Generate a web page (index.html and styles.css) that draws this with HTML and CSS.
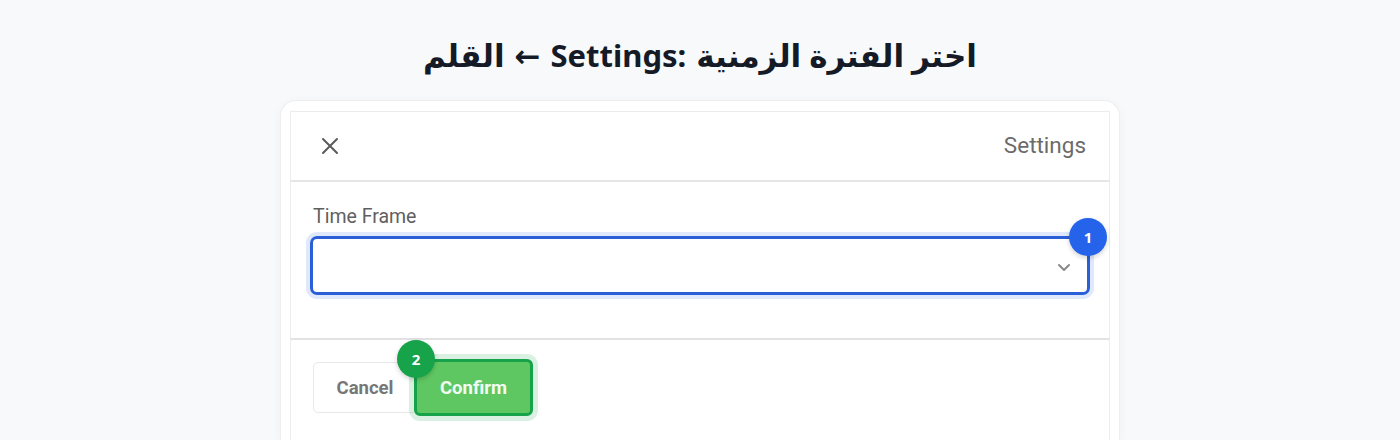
FILE: index.html
```html
<!DOCTYPE html>
<html lang="en">
<head>
    <meta charset="UTF-8">
    <title>Settings - Time Frame</title>
    <link rel="stylesheet" href="styles.css">
</head>
<body>
    <h1 class="page-title" dir="ltr">
        <span class="ar" dir="rtl">القلم</span>
        <span>←</span>
        <span>Settings:</span>
        <span class="ar" dir="rtl">اختر الفترة الزمنية</span>
    </h1>

    <div class="card">
        <div class="panel">
            <div class="panel-header">
                <button class="close-btn" aria-label="Close">
                    <svg width="18" height="18" viewBox="0 0 18 18">
                        <path d="M2 2 L16 16 M16 2 L2 16" stroke="#5a5a5a" stroke-width="2" stroke-linecap="round"/>
                    </svg>
                </button>
                <div class="panel-title">Settings</div>
            </div>

            <div class="panel-body">
                <label class="field-label">Time Frame</label>
                <div class="select-box">
                    <svg class="chevron" width="14" height="9" viewBox="0 0 14 9">
                        <path d="M2 2 L7 7 L12 2" fill="none" stroke="#8a8a8a" stroke-width="2" stroke-linecap="round" stroke-linejoin="round"/>
                    </svg>
                    <span class="badge badge-blue badge-select">1</span>
                </div>
            </div>

            <div class="panel-footer">
                <button class="btn btn-cancel">Cancel</button>
                <button class="btn btn-confirm">
                    Confirm
                    <span class="badge badge-green badge-confirm">2</span>
                </button>
            </div>
        </div>
    </div>
</body>
</html>
```

FILE: styles.css
```css
body {
    margin: 0;
    padding-top: 30px;
    background-color: #f8f9fb;
    font-family: Roboto, "Liberation Sans", sans-serif;
}
.page-title {
    margin: 0 0 20px;
    display: flex;
    justify-content: center;
    gap: 10px;
    font-family: "Noto Sans", "DejaVu Sans", sans-serif;
    font-size: 31px;
    line-height: 50px;
    font-weight: 700;
    color: #141a26;
}
.page-title .ar {
    unicode-bidi: isolate;
}
.card {
    width: 820px;
    margin: 0 auto;
    padding: 10px 9px 0;
    background-color: #ffffff;
    border: 1px solid #eceef1;
    border-bottom: none;
    border-radius: 16px 16px 0 0;
    box-shadow: 0 2px 12px rgba(0, 0, 0, 0.04);
}
.panel {
    border: 1px solid #ececec;
    border-bottom: none;
    height: 330px;
}
.panel-header {
    height: 68px;
    display: flex;
    align-items: center;
    justify-content: space-between;
    padding: 0 23px 0 30px;
    border-bottom: 2px solid #e6e6e8;
}
.close-btn {
    border: none;
    background: none;
    padding: 0;
    display: flex;
    cursor: pointer;
}
.panel-title {
    font-size: 22.5px;
    color: #6b6b6b;
    margin-top: -2px;
}
.panel-body {
    padding: 23px 19px 43px;
    border-bottom: 2px solid #e2e2e4;
}
.field-label {
    display: block;
    font-size: 19.5px;
    line-height: 24px;
    color: #5f5f5f;
    padding-left: 3px;
    margin-bottom: 7px;
}
.select-box {
    position: relative;
    height: 53px;
    border: 3px solid #2a5fd8;
    border-radius: 7px;
    box-shadow: 0 0 0 4px rgba(37, 99, 235, 0.14);
    display: flex;
    align-items: center;
    justify-content: flex-end;
    padding-right: 16px;
}
.chevron {
    margin-top: 4px;
}
.panel-footer {
    display: flex;
    align-items: center;
    padding: 19px 22px;
}
.btn {
    font-family: Roboto, "Liberation Sans", sans-serif;
    font-size: 18.5px;
    font-weight: 700;
    border-radius: 5px;
    cursor: pointer;
}
.btn-cancel {
    width: 104px;
    height: 51px;
    margin-right: -3px;
    padding: 0;
    background-color: #ffffff;
    border: 1px solid #e8e8e8;
    color: #777777;
}
.btn-confirm {
    position: relative;
    width: 119px;
    height: 57px;
    background-color: #5fc762;
    border: 3px solid #17a34a;
    border-radius: 6px;
    color: #f3fbf3;
    box-shadow: 0 0 0 5px rgba(22, 163, 74, 0.16);
}
.badge {
    position: absolute;
    width: 38px;
    height: 38px;
    border-radius: 50%;
    display: flex;
    align-items: center;
    justify-content: center;
    color: #ffffff;
    font-family: "Noto Sans", "Liberation Sans", sans-serif;
    font-size: 15px;
    font-weight: 700;
    box-shadow: 0 2px 5px rgba(0, 0, 0, 0.18);
}
.badge-blue {
    background-color: #2563eb;
}
.badge-green {
    background-color: #16a34a;
}
.badge-select {
    top: -21px;
    right: -20px;
}
.badge-confirm {
    top: -22px;
    left: -20px;
}
```
